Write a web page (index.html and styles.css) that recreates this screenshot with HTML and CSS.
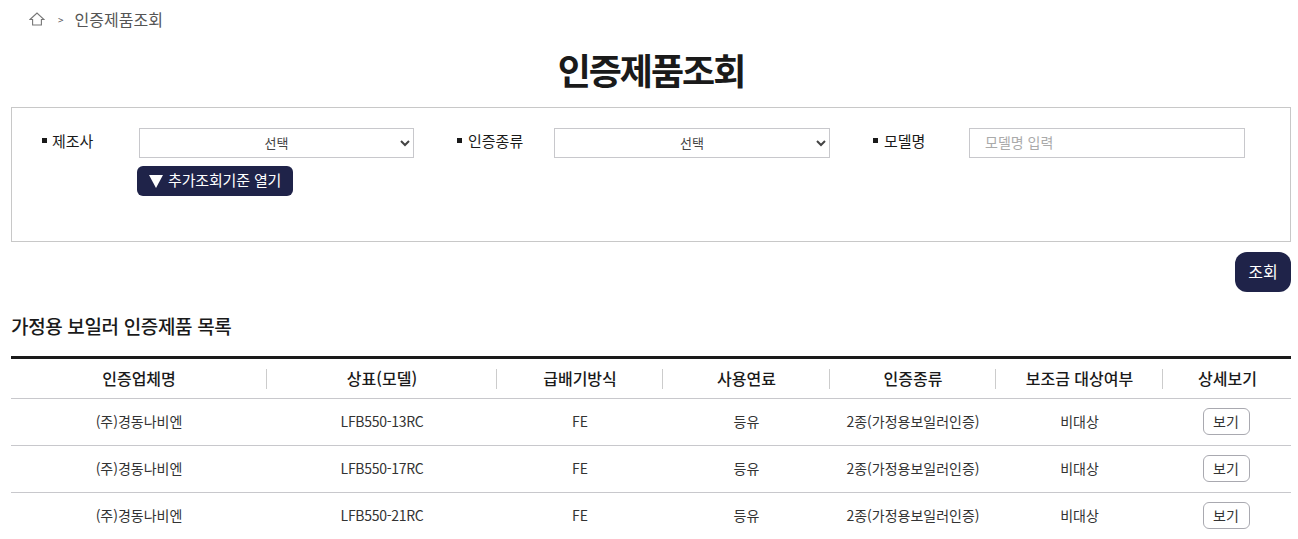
FILE: index.html
```html
<!DOCTYPE html>
<html lang="ko">
<head>
  <meta charset="UTF-8">
  <meta name="viewport" content="width=device-width, initial-scale=1.0">
  <title>인증제품조회</title>
  <link rel="stylesheet" href="styles.css">
</head>
<body>
  <div class="breadcrumb">
    <svg class="home-icon" width="16" height="14" viewBox="0 0 16 14">
      <path d="M1 7.5 8 1l7 6.5h-2.6V13H3.6V7.5Z" fill="none" stroke="#777" stroke-width="1.1"/>
    </svg>
    <span class="crumb-sep">&gt;</span>
    <span class="crumb-now">인증제품조회</span>
  </div>

  <h1 class="page-title">인증제품조회</h1>

  <div class="search-box">
    <div class="search-row">
      <div class="search-item">
        <label class="search-label">제조사</label>
        <select class="search-input"><option>선택</option></select>
      </div>
      <div class="search-item">
        <label class="search-label">인증종류</label>
        <select class="search-input"><option>선택</option></select>
      </div>
      <div class="search-item">
        <label class="search-label">모델명</label>
        <input class="search-input text-input" type="text" placeholder="모델명 입력">
      </div>
    </div>
    <button class="more-btn"><span class="more-arrow"></span><span class="more-text">추가조회기준 열기</span></button>
  </div>

  <div class="search-actions">
    <button class="search-btn">조회</button>
  </div>

  <h2 class="list-title">가정용 보일러 인증제품 목록</h2>

  <table class="list-table">
    <colgroup>
      <col class="col-a"><col class="col-b"><col class="col-c"><col class="col-d">
      <col class="col-c"><col class="col-d"><col>
    </colgroup>
    <thead>
      <tr>
        <th><span class="th-cell">인증업체명</span></th>
        <th><span class="th-cell">상표(모델)</span></th>
        <th><span class="th-cell">급배기방식</span></th>
        <th><span class="th-cell">사용연료</span></th>
        <th><span class="th-cell">인증종류</span></th>
        <th><span class="th-cell">보조금 대상여부</span></th>
        <th><span class="th-cell">상세보기</span></th>
      </tr>
    </thead>
    <tbody>
      <tr>
        <td>(주)경동나비엔</td><td class="model">LFB550-13RC</td><td>FE</td><td>등유</td>
        <td>2종(가정용보일러인증)</td><td>비대상</td>
        <td><button class="view-btn">보기</button></td>
      </tr>
      <tr>
        <td>(주)경동나비엔</td><td class="model">LFB550-17RC</td><td>FE</td><td>등유</td>
        <td>2종(가정용보일러인증)</td><td>비대상</td>
        <td><button class="view-btn">보기</button></td>
      </tr>
      <tr>
        <td>(주)경동나비엔</td><td class="model">LFB550-21RC</td><td>FE</td><td>등유</td>
        <td>2종(가정용보일러인증)</td><td>비대상</td>
        <td><button class="view-btn">보기</button></td>
      </tr>
    </tbody>
  </table>
</body>
</html>
```

FILE: styles.css
```css
html, body {
  margin: 0;
  padding: 0;
}
body {
  padding: 0 7px 0 11px;
  font-family: "Noto Sans CJK KR", "Noto Sans", sans-serif;
  color: #1a1a1a;
  background: #fff;
}
.breadcrumb {
  display: flex;
  align-items: center;
  height: 38px;
  margin-bottom: 2px;
  padding-left: 18px;
  box-sizing: border-box;
  color: #555;
}
.home-icon {
  display: block;
}
.crumb-sep {
  margin-left: 13px;
  font-size: 10px;
}
.crumb-now {
  margin-left: 11px;
  font-size: 16px;
}
.page-title {
  margin: 0;
  height: 67px;
  line-height: 58px;
  font-size: 36px;
  font-weight: 700;
  letter-spacing: -2px;
  text-align: center;
}
.search-box {
  height: 135px;
  box-sizing: border-box;
  padding: 20px 0 0 30px;
  border: 1px solid #c8c8c8;
}
.search-row {
  display: flex;
}
.search-item {
  display: flex;
  width: 415px;
}
.search-label {
  width: 97px;
  height: 25px;
  box-sizing: border-box;
  font-size: 15px;
  display: flex;
  align-items: center;
}
.search-item:last-child .search-label {
  padding-left: 1px;
}
.search-label::before {
  content: "";
  width: 5px;
  height: 5px;
  margin-right: 6px;
  background: #1a1a1a;
}
.search-item:first-child .search-label::before {
  margin-right: 5px;
}
.search-input {
  width: 276px;
  height: 30px;
  box-sizing: border-box;
  padding: 0 0 2px 12px;
  border: 1px solid #c8c8cc;
  border-radius: 0;
  background: #fff;
  font-family: inherit;
  font-size: 13px;
  color: #444;
  text-align: center;
}
.search-item:first-child .search-input {
  width: 275px;
}
.text-input {
  padding: 0 15px 2px;
  font-size: 14px;
  text-align: left;
}
.text-input::placeholder {
  color: #aaa;
}
.more-btn {
  display: flex;
  align-items: center;
  height: 30px;
  margin: 8px 0 0 95px;
  padding: 0 12px;
  border: 0;
  border-radius: 6px;
  background: #1f2349;
  color: #fff;
  font-family: inherit;
  font-size: 15px;
  letter-spacing: -0.15px;
}
.more-text {
  padding-bottom: 3px;
}
.more-arrow {
  width: 0;
  height: 0;
  margin-right: 5px;
  border-left: 7px solid transparent;
  border-right: 7px solid transparent;
  border-top: 13px solid #fff;
}
.search-actions {
  display: flex;
  justify-content: flex-end;
  margin-top: 10px;
}
.search-btn {
  width: 56px;
  height: 40px;
  padding: 0 0 2px;
  border: 0;
  border-radius: 12px;
  background: #1f2349;
  color: #fff;
  font-family: inherit;
  font-size: 16px;
}
.list-title {
  margin: 0;
  padding-top: 21px;
  height: 64px;
  box-sizing: border-box;
  line-height: 26px;
  font-size: 19px;
  font-weight: 500;
  letter-spacing: -0.35px;
}
.list-table {
  width: 1280px;
  border-collapse: collapse;
  table-layout: fixed;
  border-top: 3px solid #1a1a1a;
}
.col-a { width: 256px; }
.col-b { width: 230px; }
.col-c { width: 166px; }
.col-d { width: 167px; }
.list-table th {
  height: 39px;
  padding: 0;
  border-bottom: 1px solid #c8c8cc;
  font-size: 16px;
  font-weight: 500;
}
.th-cell {
  display: block;
  height: 20px;
  box-sizing: border-box;
  padding-left: 1px;
  line-height: 18px;
  border-right: 1px solid #ccc;
}
.list-table th:last-child .th-cell {
  border-right: 0;
}
.list-table td {
  height: 44px;
  padding: 0 0 2px;
  border-bottom: 1px solid #c8c8cc;
  font-size: 14px;
  color: #333;
  text-align: center;
}
.list-table td.model {
  letter-spacing: -0.3px;
}
.list-table tr:last-child td {
  border-bottom: 0;
}
.view-btn {
  display: block;
  width: 47px;
  height: 27px;
  margin: 0 auto;
  padding: 0;
  border: 1px solid #a9a9b0;
  border-radius: 6px;
  background: #fff;
  font-family: inherit;
  font-size: 14px;
  color: #333;
  transform: translateX(-1px);
}
```
